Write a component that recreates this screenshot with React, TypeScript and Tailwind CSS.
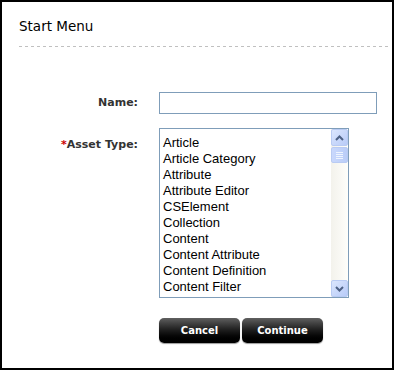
const assetTypes = [
  "Article",
  "Article Category",
  "Attribute",
  "Attribute Editor",
  "CSElement",
  "Collection",
  "Content",
  "Content Attribute",
  "Content Definition",
  "Content Filter",
];

function ScrollButton({ dir }: { dir: "up" | "down" }) {
  return (
    <div className="w-[17px] h-[17px] rounded-[2px] border border-[#b9cbf3] bg-gradient-to-br from-[#dbe6fd] to-[#b8cbf8] flex items-center justify-center">
      <svg width="9" height="6" viewBox="0 0 9 6">
        {dir === "up" ? (
          <path d="M1 5 L4.5 1.5 L8 5" fill="none" stroke="#4d6185" strokeWidth="2" />
        ) : (
          <path d="M1 1 L4.5 4.5 L8 1" fill="none" stroke="#4d6185" strokeWidth="2" />
        )}
      </svg>
    </div>
  );
}

function ListBox() {
  return (
    <div className="w-[190px] h-[170px] border border-[#7f9db9] bg-white flex">
      <div className="flex-1 pt-[6px] pl-[3px] font-['Liberation_Sans',Arial,sans-serif] text-[13px] text-black">
        {assetTypes.map((t) => (
          <div key={t} className="h-[16px] leading-[16px] whitespace-nowrap">
            {t}
          </div>
        ))}
      </div>
      {/* xp style scrollbar */}
      <div className="w-[17px] flex flex-col bg-gradient-to-r from-[#f3f2ec] to-[#fefefb]">
        <ScrollButton dir="up" />
        <div className="w-[17px] h-[16px] mt-[1px] rounded-[2px] border border-[#b9cbf3] bg-gradient-to-r from-[#c9d8fc] to-[#bacdf8] flex flex-col items-center justify-center gap-[1px]">
          <div className="w-[7px] h-[1px] bg-[#eef4fe]" />
          <div className="w-[7px] h-[1px] bg-[#eef4fe]" />
          <div className="w-[7px] h-[1px] bg-[#eef4fe]" />
          <div className="w-[7px] h-[1px] bg-[#eef4fe]" />
        </div>
        <div className="flex-1" />
        <ScrollButton dir="down" />
      </div>
    </div>
  );
}

function BlackButton({ label }: { label: string }) {
  return (
    <button className="w-[81px] h-[25px] rounded-[5px] bg-gradient-to-b from-[#606060] via-[#1c1c1c] to-black shadow-[0_1px_1px_rgba(0,0,0,0.4)] text-white font-bold text-[10px] font-['DejaVu_Sans',Verdana,sans-serif]">
      {label}
    </button>
  );
}

export default function App() {
  return (
    <div className="w-[394px] h-[370px] border-2 border-black bg-white box-border">
      <div className="pl-[17px] pr-[3px] pt-[16px]">
        <h1 className="text-[13.5px] leading-[16px] text-black font-['DejaVu_Sans',Verdana,sans-serif]">
          Start Menu
        </h1>
        <div className="mt-[12px] h-[1px] bg-[linear-gradient(to_right,#c0c0c0_3px,transparent_3px)] bg-[length:6px_1px]" />
      </div>

      <div className="grid grid-cols-[136px_190px] gap-x-[21px] mt-[45px] font-['DejaVu_Sans',Verdana,sans-serif]">
        <label className="text-right text-[11px] font-bold text-[#333] leading-[22px]">Name:</label>
        <input
          type="text"
          className="w-[218px] h-[22px] border border-[#7f9db9] outline-none px-1 text-[13px]"
        />

        <label className="mt-[14px] pt-[9px] text-right text-[11px] font-bold text-[#333] leading-[16px]">
          <span className="text-[#cc0000]">*</span>Asset Type:
        </label>
        <div className="mt-[14px]">
          <ListBox />
        </div>

        <div />
        <div className="mt-[20px] flex gap-[2px]">
          <BlackButton label="Cancel" />
          <BlackButton label="Continue" />
        </div>
      </div>
    </div>
  );
}
